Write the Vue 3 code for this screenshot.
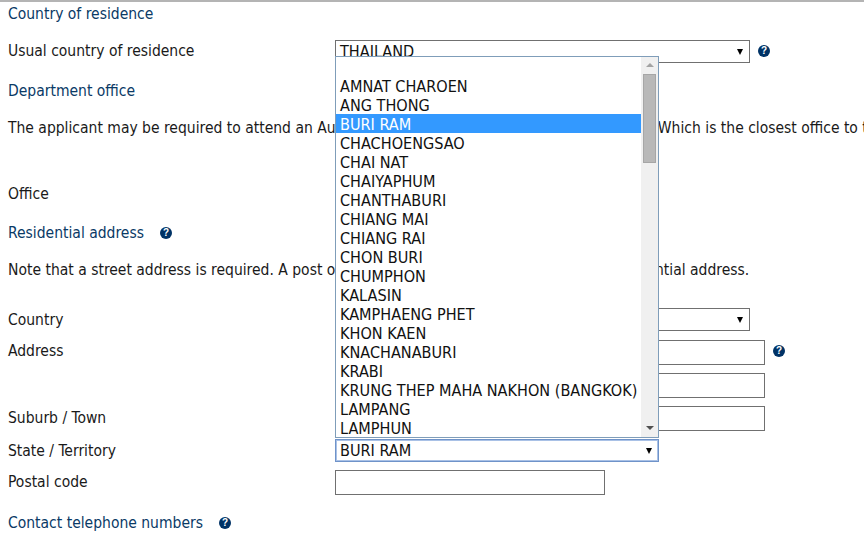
<template>
  <form class="page">
    <h2 class="heading first">Country of residence</h2>

    <div class="row usual">
      <label>Usual country of residence</label>
      <div class="control">
        <div class="select wide"><span>THAILAND</span><i class="arrow"></i></div>
        <span class="help"></span>
      </div>
    </div>

    <h2 class="heading dept">Department office</h2>
    <p class="line para">The applicant may be required to attend an Australian Government office for the interviews. Which is the closest office to the applicant?</p>

    <div class="row office">
      <label>Office</label>
    </div>

    <h2 class="heading resi">Residential address <span class="help"></span></h2>
    <p class="line note">Note that a street address is required. A post office box must not be accepted as your residential address.</p>

    <div class="row country">
      <label>Country</label>
      <div class="control">
        <div class="select wide"><span>THAILAND</span><i class="arrow"></i></div>
      </div>
    </div>
    <div class="row address">
      <label>Address</label>
      <div class="control">
        <input class="field" type="text" />
        <span class="help"></span>
      </div>
    </div>
    <div class="row address2">
      <label></label>
      <div class="control"><input class="field" type="text" /></div>
    </div>
    <div class="row suburb">
      <label>Suburb / Town</label>
      <div class="control"><input class="field" type="text" /></div>
    </div>
    <div class="row state">
      <label>State / Territory</label>
      <div class="control">
        <div class="select focused">
          <span>BURI RAM</span><i class="arrow"></i>
          <div class="popup">
            <ul class="options">
              <li v-for="s in states" :key="s" :class="{ active: s === selected }">{{ s }}</li>
            </ul>
            <div class="scrollbar">
              <i class="up"></i>
              <div class="track"><div class="thumb"></div></div>
              <i class="down"></i>
            </div>
          </div>
        </div>
      </div>
    </div>
    <div class="row postal">
      <label>Postal code</label>
      <div class="control"><input class="field short" type="text" /></div>
    </div>

    <h2 class="heading contact">Contact telephone numbers <span class="help"></span></h2>
  </form>
</template>

<script setup>
const selected = 'BURI RAM'
const states = [
  '\u00a0',
  'AMNAT CHAROEN',
  'ANG THONG',
  'BURI RAM',
  'CHACHOENGSAO',
  'CHAI NAT',
  'CHAIYAPHUM',
  'CHANTHABURI',
  'CHIANG MAI',
  'CHIANG RAI',
  'CHON BURI',
  'CHUMPHON',
  'KALASIN',
  'KAMPHAENG PHET',
  'KHON KAEN',
  'KNACHANABURI',
  'KRABI',
  'KRUNG THEP MAHA NAKHON (BANGKOK)',
  'LAMPANG',
  'LAMPHUN'
]
</script>

<style>
html,
body {
  margin: 0;
  overflow: hidden;
  background: #fff;
}
</style>

<style scoped>
.page {
  width: 864px;
  height: 534px;
  box-sizing: border-box;
  border-top: 2px solid #b4b4b4;
  overflow: hidden;
  font-family: "DejaVu Sans Condensed", "DejaVu Sans", sans-serif;
  font-stretch: condensed;
  font-size: 15.5px;
  line-height: 19px;
  color: #1a1a1a;
}

.heading {
  margin: 0;
  padding-left: 8px;
  font-size: inherit;
  font-weight: normal;
  color: #0a3a66;
  display: flex;
  align-items: flex-start;
}

.heading .help {
  margin-left: 16px;
  margin-top: 3px;
}

.first { margin-top: 3px; }
.usual { margin-top: 16px; }
.dept { margin-top: 19px; }
.para { margin-top: 18px; }
.office { margin-top: 45px; }
.resi { margin-top: 20px; }
.note { margin-top: 18px; }
.country { margin-top: 28px; }
.address { margin-top: 9px; }
.address2 { margin-top: 8px; }
.suburb { margin-top: 8px; }
.state { margin-top: 8px; }
.postal { margin-top: 8px; }
.contact { margin-top: 19px; }

.line {
  margin-bottom: 0;
  padding-left: 8px;
  white-space: nowrap;
}

.row {
  display: grid;
  grid-template-columns: 327px 1fr;
  padding-left: 8px;
}

.row label {
  padding-top: 3px;
}

.usual label,
.address label,
.office label {
  padding-top: 2px;
}

.control {
  display: flex;
  align-items: center;
  gap: 8px;
}

.usual .help {
  margin-top: -1px;
}

.address .help {
  margin-top: -3px;
}

.select {
  position: relative;
  box-sizing: border-box;
  width: 324px;
  height: 23px;
  border: 1px solid #707070;
  padding: 1px 4px 0;
  display: flex;
  align-items: center;
  justify-content: space-between;
  background: #fff;
  color: #111;
  font-size: 16.1px;
  line-height: 20px;
}

.select.wide {
  width: 415px;
}

.select.focused {
  border-color: #6f93c9;
  box-shadow: inset 0 0 0 1px #a9c1e6;
}

.arrow {
  width: 0;
  height: 0;
  margin-right: 2px;
  margin-top: -1px;
  border-left: 3.5px solid transparent;
  border-right: 3.5px solid transparent;
  border-top: 6px solid #000;
}

.field {
  display: block;
  box-sizing: border-box;
  width: 430px;
  height: 25px;
  margin: 0;
  border: 1px solid #707070;
  border-radius: 0;
  background: #fff;
  outline: none;
}

.field.short {
  width: 270px;
}

.help {
  flex: none;
  position: relative;
  display: inline-block;
  width: 12px;
  height: 12px;
  border-radius: 50%;
  background: #003366;
}

.help::after {
  content: "?";
  position: absolute;
  inset: 0;
  color: #fff;
  font: bold 10px/12px "Liberation Sans", sans-serif;
  text-align: center;
}

.popup {
  position: absolute;
  left: -1px;
  bottom: 23px;
  box-sizing: border-box;
  width: 324px;
  height: 382px;
  border: 1px solid #7f9db9;
  background: #fff;
  display: flex;
  z-index: 5;
}

.options {
  flex: 1;
  margin: 0;
  padding: 0;
  list-style: none;
  overflow: hidden;
}

.options li {
  height: 19px;
  padding-left: 4px;
  white-space: nowrap;
  color: #111;
  line-height: 21px;
}

.options li.active {
  background: #3399ff;
  color: #fff;
}

.scrollbar {
  flex: none;
  width: 17px;
  background: #f0f0f0;
  display: flex;
  flex-direction: column;
  align-items: center;
}

.up,
.down {
  flex: none;
  width: 0;
  height: 0;
  border-left: 4px solid transparent;
  border-right: 4px solid transparent;
}

.up {
  margin-top: 6px;
  border-bottom: 4px solid #a3a3a3;
}

.down {
  margin-bottom: 7px;
  border-top: 4px solid #505050;
}

.track {
  flex: 1;
  align-self: stretch;
  padding: 7px 2px 0;
}

.thumb {
  height: 87px;
  background: #b8b8b8;
  border: 1px solid #a6a6a6;
}
</style>
